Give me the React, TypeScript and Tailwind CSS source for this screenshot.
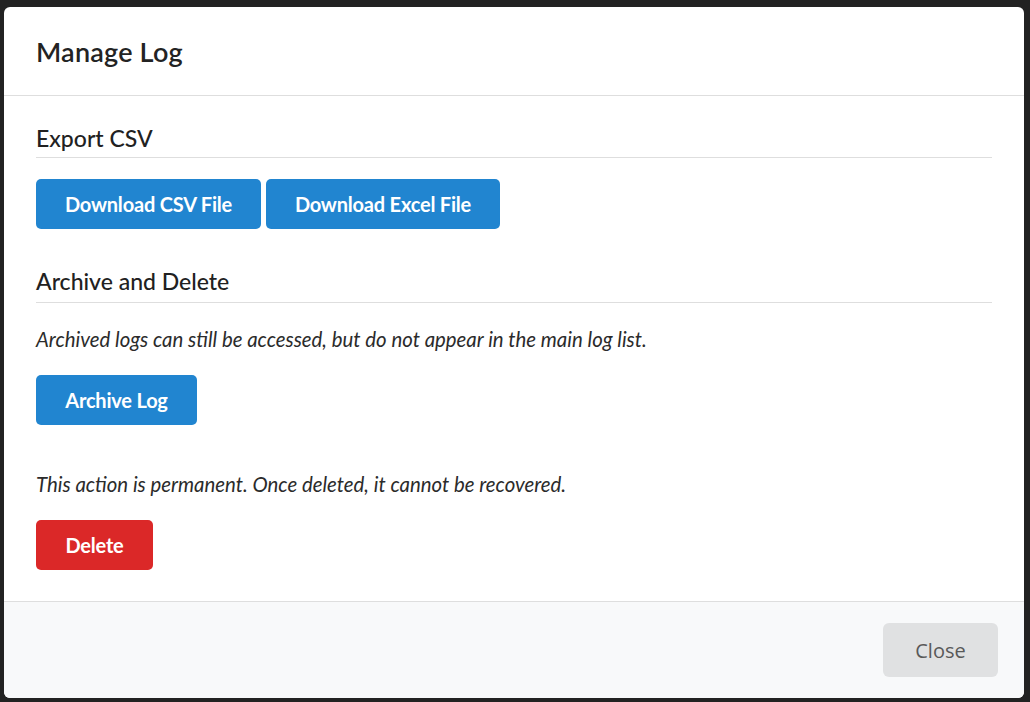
import React from "react";

const lato = { fontFamily: "Lato, 'Noto Sans', sans-serif" };

export default function App() {
  return (
    <div
      className="w-[1030px] h-[702px] bg-[#222222] pt-[7px] pl-[4px] overflow-hidden"
      style={lato}
    >
      <div className="w-[1020px] h-[691px] bg-white rounded-[6px] flex flex-col overflow-hidden">
        {/* Header */}
        <div className="h-[89px] shrink-0 border-b border-[#dedede] flex items-center px-[32px]">
          <h1 className="text-[27px] leading-[32px] font-semibold text-[#232323] tracking-[0.2px] pt-[2px]">
            Manage Log
          </h1>
        </div>

        {/* Content */}
        <div className="flex-1 px-[32px] pt-[29px] flex flex-col">
          <h2 className="text-[23px] leading-[26px] font-medium text-[#212121] pb-[6px] border-b border-[#dedede]">
            Export CSV
          </h2>
          <div className="flex gap-[5px] mt-[21px]">
            <button className="w-[225px] h-[50px] rounded-[5px] bg-[#2185d0] text-white text-[20px] font-bold tracking-[-0.2px]">
              Download CSV File
            </button>
            <button className="w-[234px] h-[50px] rounded-[5px] bg-[#2185d0] text-white text-[20px] font-bold tracking-[-0.2px]">
              Download Excel File
            </button>
          </div>

          <h2 className="mt-[39px] text-[23px] leading-[26px] font-medium text-[#212121] pb-[8px] border-b border-[#dedede]">
            Archive and Delete
          </h2>
          <p className="mt-[22px] text-[20.4px] leading-[28px] italic text-[#2b2b2b]">
            Archived logs can still be accessed, but do not appear in the main log list.
          </p>
          <div className="mt-[22px]">
            <button className="w-[161px] h-[50px] rounded-[5px] bg-[#2185d0] text-white text-[20px] font-bold tracking-[-0.2px]">
              Archive Log
            </button>
          </div>

          <p className="mt-[45px] text-[20.4px] leading-[28px] italic text-[#2b2b2b]">
            This action is permanent. Once deleted, it cannot be recovered.
          </p>
          <div className="mt-[22px]">
            <button className="w-[117px] h-[50px] rounded-[5px] bg-[#db2828] text-white text-[20px] font-bold tracking-[-0.2px]">
              Delete
            </button>
          </div>
        </div>

        {/* Footer */}
        <div className="h-[97px] shrink-0 border-t border-[#dedede] bg-[#f8f9fa] flex items-center justify-end pr-[26px]">
          <button
            className="w-[115px] h-[54px] rounded-[6px] bg-[#e0e1e2] text-[#595959] text-[20px] pt-[2px]"
            style={{ fontFamily: "'Open Sans', 'Noto Sans', sans-serif" }}
          >
            Close
          </button>
        </div>
      </div>
    </div>
  );
}
